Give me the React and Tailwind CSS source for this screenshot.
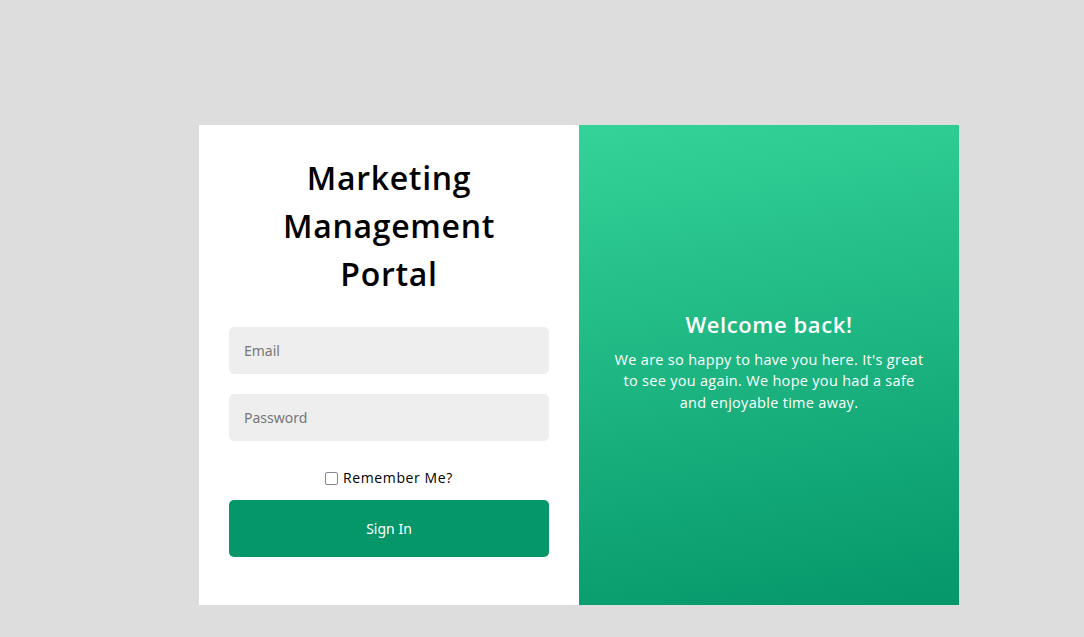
import { useState } from 'react';

const poppins = { fontFamily: '"Open Sans", "Noto Sans", sans-serif' };

function App() {
    const [email, setEmail] = useState('');
    const [password, setPassword] = useState('');
    const [remember, setRemember] = useState(false);

    return (
        <div className="min-h-screen w-full bg-[#dddddd] pt-[125px] pl-[199px]">
            <div className="flex w-[760px] h-[480px]">
                {/* Login form */}
                <div className="w-[380px] bg-white px-[30px] pt-[29px] flex flex-col">
                    <h1 className="text-[32px] leading-[48px] font-semibold text-black text-center px-[30px] tracking-[0.7px]" style={poppins}>
                        Marketing Management Portal
                    </h1>
                    <input
                        type="email"
                        value={email}
                        onChange={(e) => setEmail(e.target.value)}
                        placeholder="Email"
                        className="mt-[29px] h-[47px] w-full rounded-[5px] bg-[#eeeeee] px-[15px] text-[14px] text-gray-800 placeholder:text-[#777777] outline-none font-['Noto_Sans',sans-serif]"
                    />
                    <input
                        type="password"
                        value={password}
                        onChange={(e) => setPassword(e.target.value)}
                        placeholder="Password"
                        className="mt-[20px] h-[47px] w-full rounded-[5px] bg-[#eeeeee] px-[15px] text-[14px] text-gray-800 placeholder:text-[#777777] outline-none font-['Noto_Sans',sans-serif]"
                    />
                    <label className="mt-[27px] flex items-center justify-center gap-[5px] text-[14px] leading-[20px] text-black tracking-[0.6px]" style={poppins}>
                        <input
                            type="checkbox"
                            checked={remember}
                            onChange={(e) => setRemember(e.target.checked)}
                            className="appearance-none w-[13px] h-[13px] border-[1.5px] border-[#8a8794] rounded-[2px] bg-white"
                        />
                        Remember Me?
                    </label>
                    <button className="mt-[12px] h-[57px] w-full rounded-[5px] bg-[#059669] text-white text-[14px] font-['Noto_Sans',sans-serif]">
                        Sign In
                    </button>
                </div>

                {/* Welcome panel */}
                <div className="w-[380px] bg-[linear-gradient(170deg,#34d399,#059669)] flex flex-col items-center justify-center px-[35px] pb-[8px] text-white text-center" style={poppins}>
                    <h2 className="text-[22px] leading-[30px] font-semibold tracking-[0.6px]">Welcome back!</h2>
                    <p className="mt-[10px] text-[14.5px] leading-[21.5px] tracking-[0.3px]">
                        We are so happy to have you here. It's great to see you again. We hope you had a safe and enjoyable time away.
                    </p>
                </div>
            </div>
        </div>
    );
}

export default App;
